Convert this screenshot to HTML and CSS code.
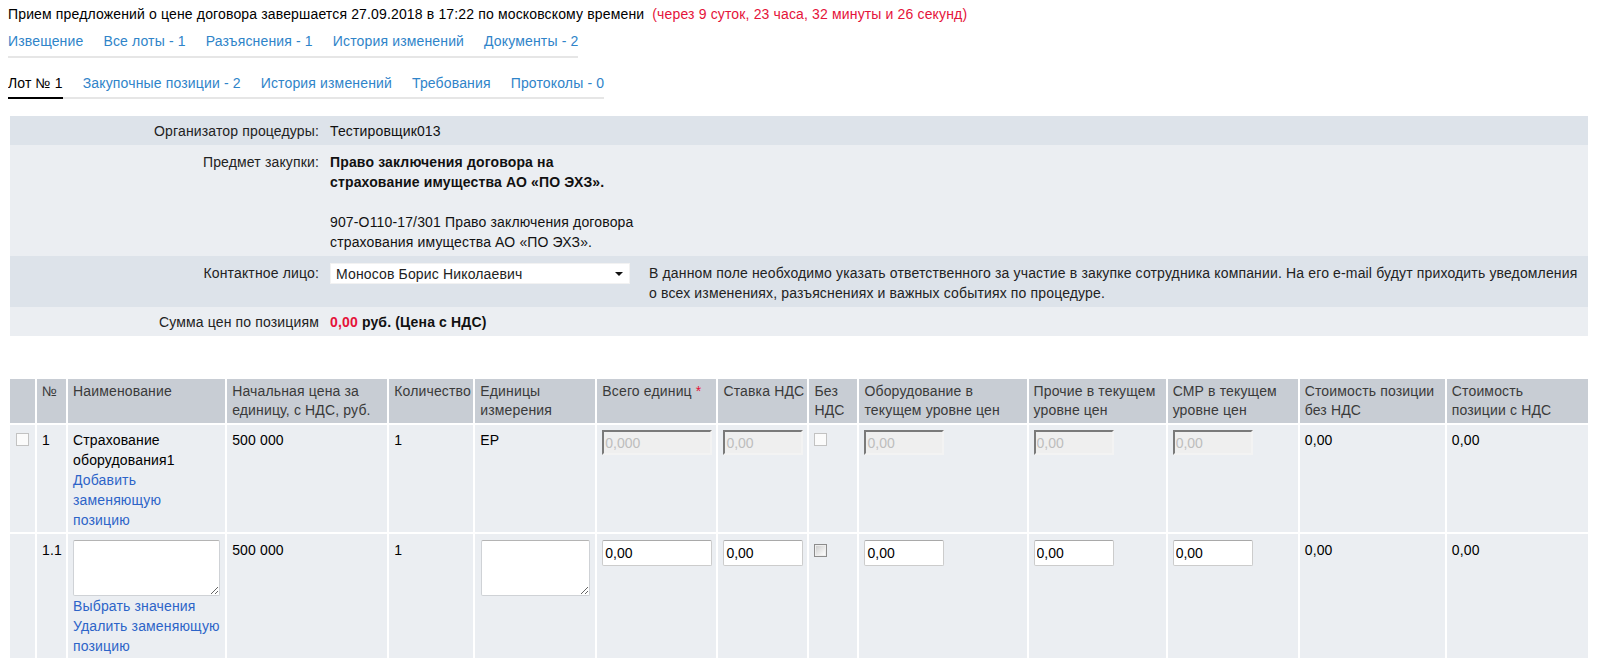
FILE: index.html
```html
<!DOCTYPE html>
<html lang="ru">
<head>
<meta charset="utf-8">
<title>Лот № 1</title>
<link rel="stylesheet" href="styles.css">
</head>
<body>
  <div class="deadline">Прием предложений о цене договора завершается 27.09.2018 в 17:22 по московскому времени <span class="countdown">(через 9 суток, 23 часа, 32 минуты и 26 секунд)</span></div>

  <nav class="nav">
    <a href="#">Извещение</a>
    <a href="#">Все лоты - 1</a>
    <a href="#">Разъяснения - 1</a>
    <a href="#">История изменений</a>
    <a href="#">Документы - 2</a>
  </nav>

  <div class="tabs">
    <a href="#" class="tab active">Лот № 1</a>
    <a href="#" class="tab">Закупочные позиции - 2</a>
    <a href="#" class="tab">История изменений</a>
    <a href="#" class="tab">Требования</a>
    <a href="#" class="tab">Протоколы - 0</a>
  </div>

  <div class="info">
    <div class="info-row dark">
      <div class="label">Организатор процедуры:</div>
      <div class="value">Тестировщик013</div>
      <div class="desc"></div>
    </div>
    <div class="info-row light tall">
      <div class="label">Предмет закупки:</div>
      <div class="value"><b>Право заключения договора на страхование имущества АО «ПО ЭХЗ».</b><br><br>907-О110-17/301 Право заключения договора страхования имущества АО «ПО ЭХЗ».</div>
      <div class="desc"></div>
    </div>
    <div class="info-row dark tall">
      <div class="label">Контактное лицо:</div>
      <div class="value">
        <div class="select">
          <select>
            <option>Моносов Борис Николаевич</option>
          </select>
        </div>
      </div>
      <div class="desc">В данном поле необходимо указать ответственного за участие в закупке сотрудника компании. На его e-mail будут приходить уведомления о всех изменениях, разъяснениях и важных событиях по процедуре.</div>
    </div>
    <div class="info-row light">
      <div class="label">Сумма цен по позициям</div>
      <div class="value"><b><span class="red">0,00</span> руб. (Цена с НДС)</b></div>
      <div class="desc"></div>
    </div>
  </div>

  <table class="positions">
    <colgroup>
      <col class="w-cb">
      <col class="w-num">
      <col class="w-name">
      <col class="w-price">
      <col class="w-qty">
      <col class="w-unit">
      <col class="w-total">
      <col class="w-rate">
      <col class="w-nonds">
      <col class="w-equip">
      <col class="w-other">
      <col class="w-smr">
      <col class="w-cost">
      <col class="w-costnds">
    </colgroup>
    <thead>
      <tr>
        <th></th>
        <th>№</th>
        <th>Наименование</th>
        <th>Начальная цена за единицу, с НДС, руб.</th>
        <th class="nowrap">Количество</th>
        <th>Единицы измерения</th>
        <th>Всего единиц <span class="red">*</span></th>
        <th class="nowrap">Ставка НДС</th>
        <th>Без НДС</th>
        <th>Оборудование в текущем уровне цен</th>
        <th>Прочие в текущем уровне цен</th>
        <th>СМР в текущем уровне цен</th>
        <th>Стоимость позиции без НДС</th>
        <th class="th-last">Стоимость позиции с НДС</th>
      </tr>
    </thead>
    <tbody>
      <tr>
        <td><input type="checkbox" class="cb cb-center"></td>
        <td>1</td>
        <td>
          <div>Страхование оборудования1</div>
          <a href="#" class="tlink">Добавить заменяющую позицию</a>
        </td>
        <td>500 000</td>
        <td>1</td>
        <td>ЕР</td>
        <td><input type="text" class="inp inp-wide" value="0,000" disabled></td>
        <td><input type="text" class="inp" value="0,00" disabled></td>
        <td><input type="checkbox" class="cb" disabled></td>
        <td><input type="text" class="inp" value="0,00" disabled></td>
        <td><input type="text" class="inp" value="0,00" disabled></td>
        <td><input type="text" class="inp" value="0,00" disabled></td>
        <td>0,00</td>
        <td>0,00</td>
      </tr>
      <tr class="sub">
        <td></td>
        <td>1.1</td>
        <td>
          <textarea class="ta ta-name"></textarea>
          <a href="#" class="tlink">Выбрать значения</a><br>
          <a href="#" class="tlink">Удалить заменяющую позицию</a>
        </td>
        <td>500 000</td>
        <td>1</td>
        <td><textarea class="ta ta-unit"></textarea></td>
        <td><input type="text" class="inp inp-wide" value="0,00"></td>
        <td><input type="text" class="inp" value="0,00"></td>
        <td><input type="checkbox" class="cb cb-on"></td>
        <td><input type="text" class="inp" value="0,00"></td>
        <td><input type="text" class="inp" value="0,00"></td>
        <td><input type="text" class="inp" value="0,00"></td>
        <td>0,00</td>
        <td>0,00</td>
      </tr>
    </tbody>
  </table>
</body>
</html>
```

FILE: styles.css
```css
html, body {
  margin: 0;
  padding: 0;
}

body {
  margin: 0 8px;
  font-family: "Liberation Sans", Arial, sans-serif;
  font-size: 14px;
  line-height: 20px;
  letter-spacing: 0.15px;
  color: #111;
  background: #fff;
}

a {
  color: #2f84c9;
  text-decoration: none;
}

.red {
  color: #e5133a;
}

.deadline {
  padding-top: 4px;
  white-space: nowrap;
  color: #000;
}

.countdown {
  color: #e5133a;
  margin-left: 4px;
}

.nav {
  display: flex;
  width: fit-content;
  gap: 20px;
  margin-top: 7px;
  padding-bottom: 5px;
  border-bottom: 2px solid #e6e6e6;
}

.tabs {
  display: flex;
  width: fit-content;
  gap: 20px;
  margin-top: 15px;
  border-bottom: 2px solid #e6e6e6;
}

.tab {
  padding-bottom: 4px;
  border-bottom: 2px solid transparent;
  margin-bottom: -2px;
}

.tab.active {
  color: #000;
  border-bottom-color: #000;
}

/* info block */
.info {
  margin: 17px 2px 0;
}

.info-row {
  display: grid;
  grid-template-columns: 320px 319px 1fr;
  padding: 5px 0 4px;
  color: #111;
}

.info-row.tall {
  padding-top: 7px;
}

.info-row.dark {
  background: #dde3ea;
}

.info-row.light {
  background: #ebeef2;
}

.label {
  text-align: right;
  padding-right: 11px;
  color: #222;
}

.value {
  padding-right: 11px;
}

.desc {
  padding-right: 10px;
  color: #222;
}

.select {
  position: relative;
  width: 300px;
  height: 21px;
  background: #fff;
}

.select select {
  appearance: none;
  -webkit-appearance: none;
  display: block;
  width: 100%;
  height: 21px;
  margin: 0;
  padding: 0 20px 0 5px;
  border: 1px solid #f2f2f2;
  border-radius: 0;
  background: #fff;
  font-family: "Liberation Sans", Arial, sans-serif;
  font-size: 14px;
  letter-spacing: 0.15px;
  color: #222;
  outline: none;
}

.select::after {
  content: "";
  position: absolute;
  right: 7px;
  top: 9px;
  border-left: 4px solid transparent;
  border-right: 4px solid transparent;
  border-top: 4px solid #111;
  pointer-events: none;
}

/* positions table */
.positions {
  width: 100%;
  margin-top: 41px;
  border-collapse: separate;
  border-spacing: 2px;
  table-layout: fixed;
}

.w-cb { width: 25px; }
.w-num { width: 29px; }
.w-name { width: 157px; }
.w-price { width: 160px; }
.w-qty { width: 84px; }
.w-unit { width: 120px; }
.w-total { width: 119px; }
.w-rate { width: 89px; }
.w-nonds { width: 48px; }
.w-equip { width: 167px; }
.w-other { width: 137px; }
.w-smr { width: 130px; }
.w-cost { width: 145px; }
.w-costnds { width: 141px; }

.positions th {
  background: #c8cdd4;
  color: #3a3a3a;
  font-weight: normal;
  text-align: left;
  vertical-align: top;
  padding: 3px 5px;
  line-height: 19px;
}

.positions th.nowrap {
  white-space: nowrap;
}

.positions th.th-last {
  padding-right: 12px;
}

.positions td {
  background: #ebeef2;
  color: #000;
  vertical-align: top;
  padding: 5px 5px 2px;
  line-height: 20px;
}

.positions tr.sub td {
  padding-top: 6px;
}

.tlink {
  color: #2d64c8;
}

.inp {
  display: block;
  box-sizing: border-box;
  width: 80px;
  height: 26px;
  margin: 0;
  padding: 0 2px;
  border: 1px solid #cccccc;
  border-top-color: #a9a9a9;
  border-radius: 2px;
  background: #fff;
  font-family: "Liberation Sans", Arial, sans-serif;
  font-size: 14px;
  color: #000;
}

.inp-wide {
  width: 110px;
}

.inp:disabled {
  height: 25px;
  padding: 0 1px;
  border-radius: 0;
  border-top: 2px solid #7a7a7a;
  border-left: 2px solid #7a7a7a;
  border-right: 2px solid #f3f3f3;
  border-bottom: 2px solid #f3f3f3;
  background: #efefef;
  color: #bdbdbd;
}

.cb {
  appearance: none;
  -webkit-appearance: none;
  display: block;
  box-sizing: border-box;
  width: 13px;
  height: 13px;
  margin: 3px 0 0;
  border: 1px solid #c2c2c2;
  border-radius: 0;
  background: #fbfbfb;
}

.cb-center {
  margin: 3px auto 0;
}

.cb-on {
  margin-top: 4px;
  border-color: #8c8c8c;
  background: linear-gradient(135deg, #c9c9c9 0%, #f2f2f2 70%, #ffffff 100%);
  box-shadow: inset 0 0 0 1px #eeeeee;
}

.ta {
  display: block;
  box-sizing: border-box;
  height: 56px;
  margin: 0;
  border: 1px solid #cfd2d6;
  border-top-color: #b4b4b4;
  border-radius: 2px;
  background: #fff;
  font-family: "Liberation Sans", Arial, sans-serif;
  font-size: 14px;
}

.ta-name {
  width: 147px;
}

.ta-unit {
  width: 109px;
  margin-left: 1px;
}
```
